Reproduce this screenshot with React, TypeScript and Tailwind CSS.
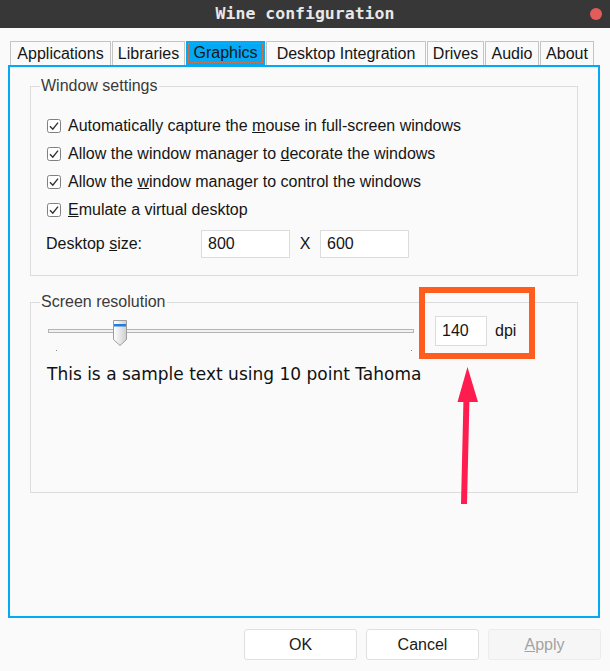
import React from 'react';

const tabs = [
  { name: 'Applications', w: 'w-[101px]' },
  { name: 'Libraries', w: 'w-[73px]' },
  { name: 'Graphics', w: 'w-[79px]', active: true },
  { name: 'Desktop Integration', w: 'w-[160px]' },
  { name: 'Drives', w: 'w-[57px]' },
  { name: 'Audio', w: 'w-[54px]' },
  { name: 'About', w: 'w-[54px]' },
];

const Check = () => (
  <svg width="14" height="14" viewBox="0 0 14 14" className="shrink-0">
    <rect x="0.5" y="0.5" width="13" height="13" rx="2" fill="#fff" stroke="#808080" />
    <path d="M3 7.2 L5.8 10.2 L11 3.6" fill="none" stroke="#333" strokeWidth="1.4" />
  </svg>
);

const CheckRow = ({ children }: { children: React.ReactNode }) => (
  <div className="flex items-center gap-[7px] h-[28px]">
    <Check />
    <span>{children}</span>
  </div>
);

const Thumb = () => (
  <svg width="14" height="26" viewBox="0 0 14 26" className="absolute left-[65px] top-[4px]">
    <defs>
      <linearGradient id="th" x1="0" x2="1" y1="0" y2="0">
        <stop offset="0" stopColor="#ffffff" />
        <stop offset="1" stopColor="#cfcfcf" />
      </linearGradient>
    </defs>
    <path d="M0.5 0.5 H13.5 V19.5 L7 25.5 L0.5 19.5 Z" fill="url(#th)" stroke="#9c9c9c" />
    <rect x="1" y="4" width="12" height="2.5" fill="#1f7fe0" />
  </svg>
);

const Button = ({ label, disabled }: { label: React.ReactNode; disabled?: boolean }) => (
  <div
    className={
      disabled
        ? 'w-[113px] h-[31px] flex items-center justify-center rounded-[3px] border border-[#ececec] bg-[#f6f6f6] text-[#a3a3a3]'
        : 'w-[113px] h-[31px] flex items-center justify-center rounded-[3px] border border-[#e0e0e0] bg-white text-[#1a1a1a]'
    }
  >
    {label}
  </div>
);

export default function App() {
  return (
    <div className="relative w-[610px] h-[671px] bg-[#fafafa] overflow-hidden font-['Liberation_Sans',Arial,sans-serif] text-[16px] leading-[18px] text-[#151515]">
      {/* title bar */}
      <div className="relative h-[28px] bg-[#373737] flex items-center justify-center">
        <span className="font-['DejaVu_Sans_Mono',monospace] font-bold text-[16.5px] text-[#e8e8e8]">
          Wine configuration
        </span>
        <div className="absolute right-[8px] top-[8px] w-[12px] h-[12px] rounded-full bg-[#e35c5c]" />
      </div>

      {/* tabs */}
      <div className="flex gap-[1px] pl-[10px] mt-[13px] h-[24px]">
        {tabs.map((t) =>
          t.active ? (
            <div key={t.name} className={`${t.w} h-full bg-[#03a9f4] flex items-center justify-center p-[2px]`}>
              <span className="w-full h-full flex items-center justify-center border border-dotted border-[#c97a55]">
                {t.name}
              </span>
            </div>
          ) : (
            <div
              key={t.name}
              className={`${t.w} h-full border border-b-0 border-[#c4c4c4] flex items-center justify-center`}
            >
              {t.name}
            </div>
          ),
        )}
      </div>

      {/* panel */}
      <div className="ml-[8px] w-[592px] h-[553px] border-2 border-[#03a9f4] px-[20px] pt-[10px]">
        <fieldset className="border border-[#dcdcdc] px-[16px] pt-[17px] pb-[17px]">
          <legend className="-ml-[7px] px-[1px] text-[#3a3a3a]">Window settings</legend>
          <CheckRow>
            Automatically capture the <u>m</u>ouse in full-screen windows
          </CheckRow>
          <CheckRow>
            Allow the window manager to <u>d</u>ecorate the windows
          </CheckRow>
          <CheckRow>
            Allow the <u>w</u>indow manager to control the windows
          </CheckRow>
          <CheckRow>
            <u>E</u>mulate a virtual desktop
          </CheckRow>
          <div className="flex items-center mt-[6px] h-[28px]">
            <span className="w-[155px] -ml-[1px]">
              Desktop <u>s</u>ize:
            </span>
            <div className="w-[89px] h-[28px] border border-[#dcdcdc] bg-white flex items-center px-[6px]">800</div>
            <span className="w-[30px] text-center">X</span>
            <div className="w-[89px] h-[28px] border border-[#dcdcdc] bg-white flex items-center px-[6px]">600</div>
          </div>
        </fieldset>

        <fieldset className="mt-[17px] h-[200px] border border-[#dcdcdc] px-[16px] pt-[5px]">
          <legend className="-ml-[7px] px-[1px] text-[#3a3a3a]">Screen resolution</legend>
          <div className="flex items-center h-[30px]">
            <div className="relative w-[366px] h-[30px] ml-[1px]">
              <div className="absolute left-0 right-0 top-[13px] h-[4px] border border-[#b4b4b4] bg-[#f2f2f2]" />
              <Thumb />
              <div className="absolute left-[8px] top-[34px] w-[1px] h-[1px] bg-[#888]" />
              <div className="absolute left-[363px] top-[34px] w-[1px] h-[1px] bg-[#888]" />
            </div>
            <div className="ml-[21px] w-[52px] h-[30px] border border-[#dcdcdc] bg-white flex items-center px-[6px]">
              140
            </div>
            <span className="ml-[8px]">dpi</span>
          </div>
          <div className="mt-[18px] font-['DejaVu_Sans',sans-serif] text-[17px] leading-[20px] text-[#111]">
            This is a sample text using 10 point Tahoma
          </div>
        </fieldset>
      </div>

      {/* buttons */}
      <div className="flex justify-end gap-[9px] pr-[9px] mt-[11px]">
        <Button label="OK" />
        <Button label="Cancel" />
        <Button
          label={
            <span>
              <u>A</u>pply
            </span>
          }
          disabled
        />
      </div>

      {/* annotation overlay */}
      <div className="absolute left-[419px] top-[287px] w-[116px] h-[72px] border-[6px] border-[#ff5d1d]" />
      <svg className="absolute left-0 top-0 pointer-events-none" width="610" height="671">
        <path d="M464 504 L466.5 398" stroke="#ff1c4f" strokeWidth="6" fill="none" />
        <path d="M467.5 367 L478 402 L457.5 402 Z" fill="#ff1c4f" />
      </svg>
    </div>
  );
}
